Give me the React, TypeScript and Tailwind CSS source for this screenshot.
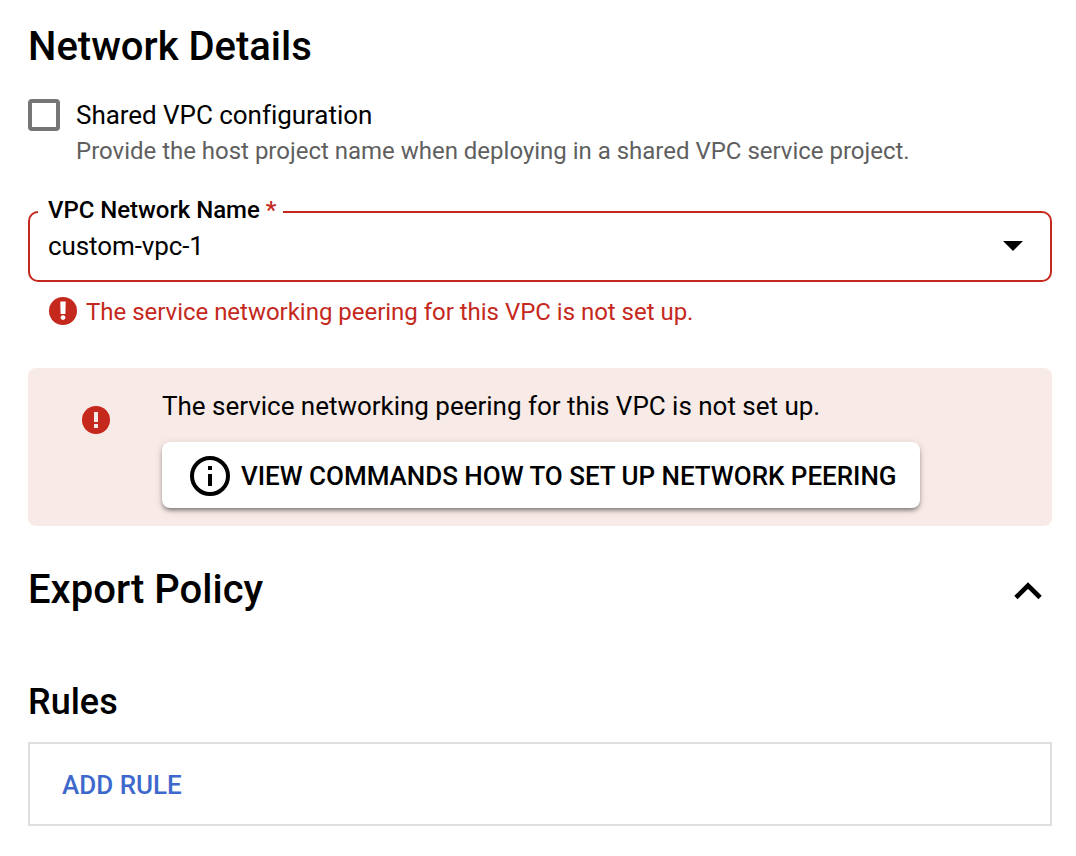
import React from "react";

export default function App() {
  return (
    <main className="flex h-[856px] w-[1076px] flex-col bg-white pl-7 pr-6 pt-[23px] font-['Roboto',sans-serif] text-black">
      <h2 className="h-12 text-[40px] font-medium leading-[48px]">Network Details</h2>
      <div className="mt-[26px] flex h-[72px] gap-4">
        <span className="mt-0.5 size-8 shrink-0 rounded-[4px] border-4 border-[#757575]" />
        <div>
          <div className="text-[26px] leading-9 tracking-[-0.04px]">Shared VPC configuration</div>
          <div className="text-[24px] leading-9 tracking-[-0.01px] text-[#5f5f5f]">Provide the host project name when deploying in a shared VPC service project.</div>
        </div>
      </div>
      <fieldset className="mt-[27px] flex h-[86px] w-full flex-col rounded-[10px] border-2 border-[#c5281c] px-2">
        <legend className="pb-1 pl-2.5 pr-[7px] text-[24px] font-medium leading-7 tracking-[-0.04px]">
          VPC Network Name <span className="text-[#c5281c]">*</span>
        </legend>
        <div className="flex items-center justify-between pl-2.5 pr-[19px]">
          <span className="text-[26px] leading-9 tracking-[-0.1px]">custom-vpc-1</span>
          <svg viewBox="0 0 20 10" className="h-2.5 w-5"><path d="M0 0h20L10 10z" /></svg>
        </div>
      </fieldset>
      <div className="mt-[15px] flex h-7 items-center gap-[9px] pl-[21px] text-[24px] tracking-[-0.02px] text-[#c5281c]">
        <svg viewBox="0 0 28 28" className="size-7" aria-hidden="true">
          <circle cx="14" cy="14" r="14" fill="#c5281c" />
          <path d="M11.3 4.6h5.4l-.3 12.4h-4.8z" fill="#fff" />
          <circle cx="14" cy="20.6" r="2.4" fill="#fff" />
        </svg>
        <span className="pt-0.5">The service networking peering for this VPC is not set up.</span>
      </div>
      <section className="mt-[43px] flex h-[158px] rounded-[8px] bg-[#f8eae7] pl-[54px]">
        <svg viewBox="0 0 28 28" className="mt-[38px] size-7" aria-hidden="true">
          <circle cx="14" cy="14" r="14" fill="#c5281c" />
          <path d="M12 6h4v10h-4zM12 18h4v4h-4z" fill="#f8eae7" />
        </svg>
        <div className="ml-[52px] pt-5">
          <p className="text-[26px] leading-9 tracking-[-0.02px]">The service networking peering for this VPC is not set up.</p>
          <button className="mt-[18px] flex h-[66px] w-[758px] items-center gap-[11px] rounded-[8px] bg-white pl-7 pt-0.5 text-[26px] font-medium tracking-[-0.02px] shadow-[0_3px_4px_-1px_rgba(0,0,0,0.45),0_2px_8px_rgba(0,0,0,0.14)]">
            <svg viewBox="0 0 40 40" className="size-10"><circle cx="20" cy="20" r="18" fill="none" stroke="#000" strokeWidth="4" /><path d="M18 10h4v4h-4zM18 18h4v12h-4z" /></svg>
            <span className="whitespace-nowrap">VIEW COMMANDS HOW TO SET UP NETWORK PEERING</span>
          </button>
        </div>
      </section>
      <div className="mt-10 flex h-12 items-center justify-between pr-2.5">
        <h2 className="text-[40px] font-medium leading-[48px]">Export Policy</h2>
        <svg viewBox="0 0 28 18" className="mt-0.5 h-[18px] w-7"><path d="M1.9 15.5 14 3.5l12.1 12" fill="none" stroke="#000" strokeWidth="4.6" /></svg>
      </div>
      <h3 className="mt-[66px] h-11 text-[36px] font-medium leading-[44px]">Rules</h3>
      <div className="mt-[18px] flex h-[84px] items-center border-2 border-[#dfdfdf] pl-8 pt-0.5">
        <button className="text-[26px] font-medium text-[#3e69cc]">ADD RULE</button>
      </div>
    </main>
  );
}
